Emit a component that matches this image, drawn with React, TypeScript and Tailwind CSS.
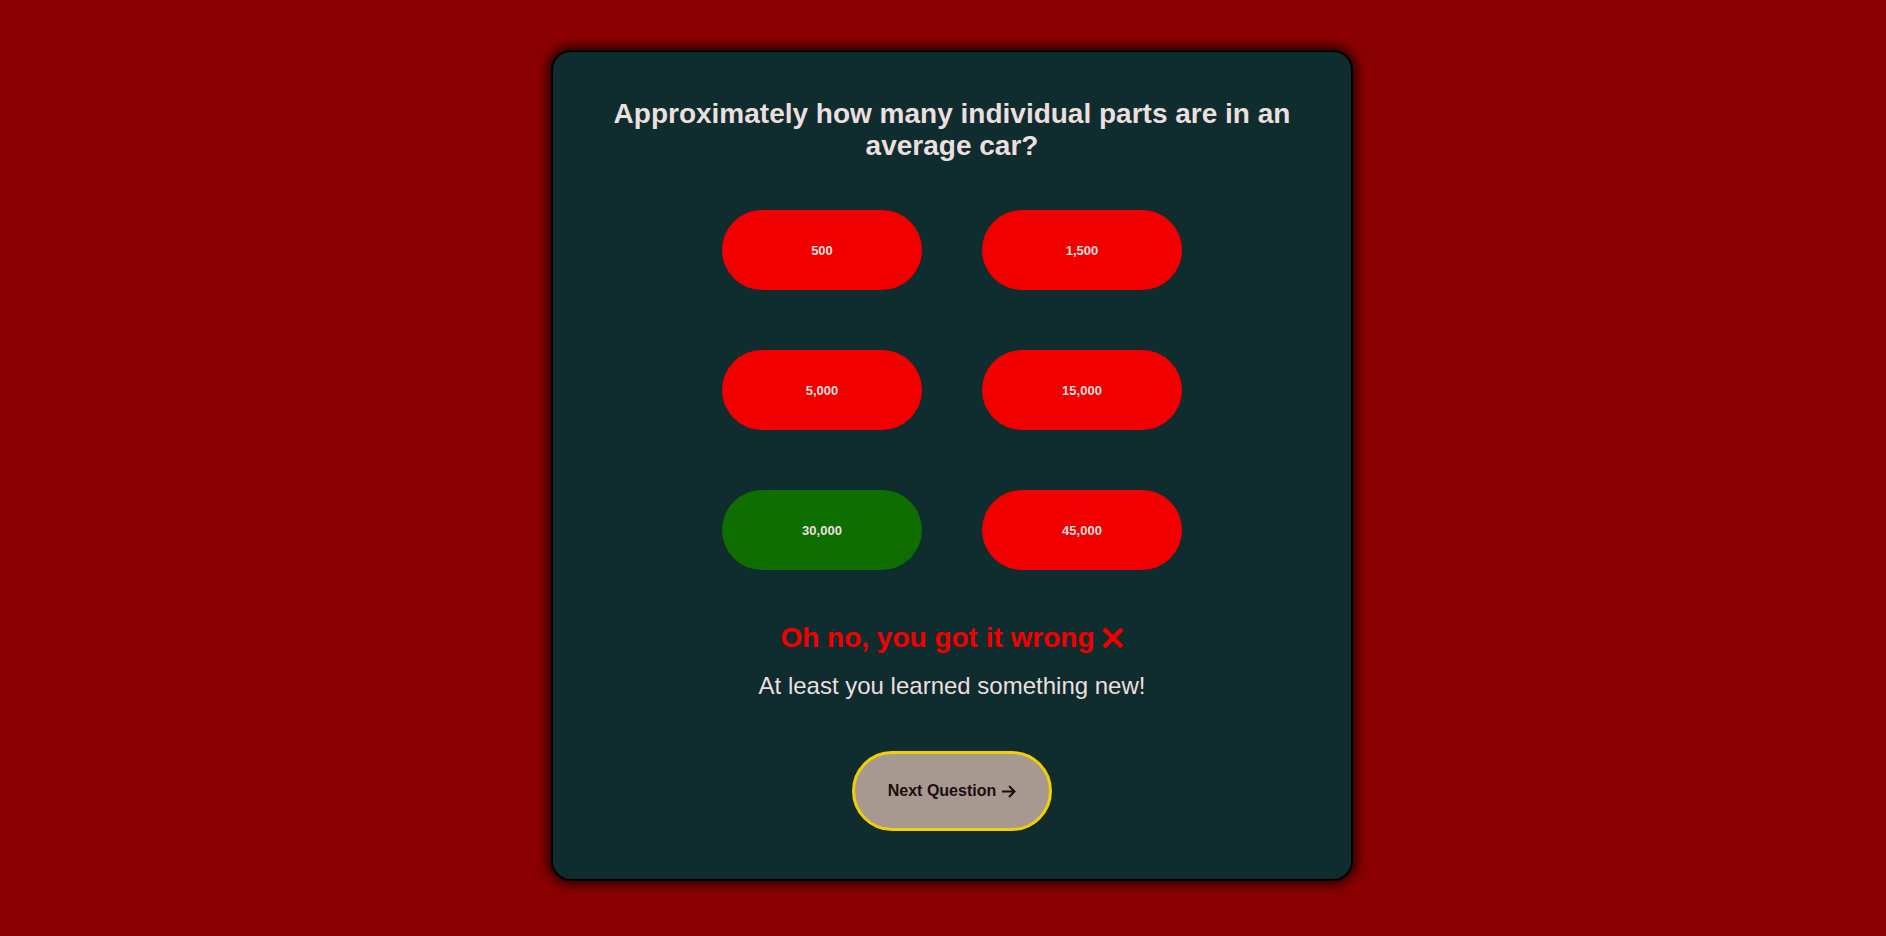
import React from "react";

const options = [
  { label: "500", correct: false },
  { label: "1,500", correct: false },
  { label: "5,000", correct: false },
  { label: "15,000", correct: false },
  { label: "30,000", correct: true },
  { label: "45,000", correct: false },
];

const App: React.FC = () => {
  return (
    <div
      className="min-h-screen w-full bg-[#8b0000] flex justify-center pl-[18px] pt-[50px]"
      style={{ fontFamily: '"Liberation Sans", Arial, sans-serif' }}
    >
      <div className="w-[802px] h-[831px] rounded-[20px] border-2 border-black bg-[#0f2d2e] shadow-[0_0_10px_5px_rgba(0,0,0,0.6)] flex flex-col items-center pt-[46px]">
        <h2 className="text-[28px] leading-[1.15] font-bold text-[#ecdfdf] text-center w-[700px]">
          Approximately how many individual parts are in an average car?
        </h2>

        <div className="grid grid-cols-[200px_200px] gap-x-[60px] gap-y-[60px] mt-[48px]">
          {options.map((o) => (
            <button
              key={o.label}
              className={
                "h-[80px] w-[200px] rounded-full text-[13px] font-bold text-[#ecdfdf] " +
                (o.correct ? "bg-[#0f6e00]" : "bg-[#f20000]")
              }
            >
              {o.label}
            </button>
          ))}
        </div>

        <div className="mt-[52px] flex items-center gap-[7px] text-[28px] leading-[1.15] font-bold text-[#f20000]">
          <span>Oh no, you got it wrong</span>
          <svg width="22" height="22" viewBox="0 0 22 22">
            <path d="M2 2 L20 20 M20 2 L2 20" stroke="#f20000" strokeWidth="4.5" strokeLinecap="butt" />
          </svg>
        </div>
        <p className="mt-[17px] text-[24px] leading-[1.15] text-[#ecdfdf]">
          At least you learned something new!
        </p>

        <button className="mt-[52px] h-[80px] w-[200px] rounded-full border-[3px] border-[#f2cf00] bg-[#a79890] text-[16px] font-bold text-[#1a0e0e] flex items-center justify-center gap-[5px]">
          <span>Next Question</span>
          <svg width="15" height="13" viewBox="0 0 15 13" className="mt-[1px]">
            <path d="M1 6.5 H13.5 M8 1 L13.5 6.5 L8 12" stroke="#1a0e0e" strokeWidth="2" fill="none" />
          </svg>
        </button>
      </div>
    </div>
  );
};

export default App;
